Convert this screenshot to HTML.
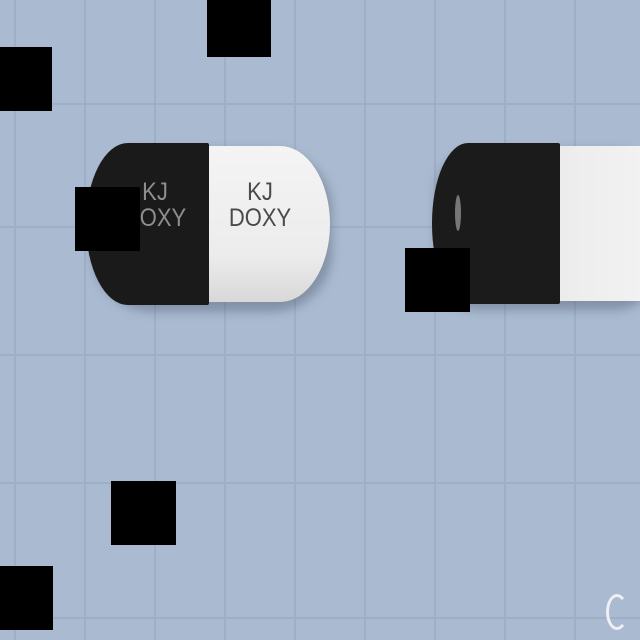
<!DOCTYPE html>
<html><head><style>
body{margin:0;width:640px;height:640px;overflow:hidden;position:relative;background:#aabbd1;font-family:"Liberation Sans",sans-serif}
.v{position:absolute;top:0;width:2px;height:640px;background:#9eb0c8}
.h{position:absolute;left:0;height:2px;width:640px;background:#9eb0c8}
.b{position:absolute;background:#000}
.t{position:absolute;text-align:center;font-size:25px;line-height:26px;transform:scaleX(0.88)}
</style></head><body>
<div class="v" style="left:14px"></div><div class="v" style="left:84px"></div><div class="v" style="left:154px"></div><div class="v" style="left:224px"></div><div class="v" style="left:294px"></div><div class="v" style="left:364px"></div><div class="v" style="left:434px"></div><div class="v" style="left:504px"></div><div class="v" style="left:574px"></div>
<div class="h" style="top:103px"></div><div class="h" style="top:226px"></div><div class="h" style="top:354px"></div><div class="h" style="top:482px"></div><div class="h" style="top:617px"></div>
<div style="position:absolute;left:92px;top:150px;width:240px;height:162px;border-radius:60px;background:rgba(60,70,90,.35);filter:blur(5px)"></div>
<div style="position:absolute;left:190px;top:146px;width:140px;height:156px;background:linear-gradient(#f4f4f4,#ececec 70%,#d8d8d8);border-radius:0 50px 50px 0/0 78px 78px 0"></div>
<div style="position:absolute;left:86px;top:143px;width:123px;height:162px;background:#1a1a1a;border-radius:42px 2px 2px 42px/81px 2px 2px 81px"></div>
<div class="t" style="left:205px;top:179px;width:110px;color:#4a4a4a">KJ<br>DOXY</div>
<div class="t" style="left:100px;top:179px;width:110px;color:#8e8e8e">KJ<br>DOXY</div>
<div style="position:absolute;left:436px;top:150px;width:220px;height:160px;border-radius:40px;background:rgba(60,70,90,.35);filter:blur(5px)"></div>
<div style="position:absolute;left:545px;top:146px;width:100px;height:155px;background:linear-gradient(90deg,#ebebeb,#f2f2f2)"></div>
<div style="position:absolute;left:432px;top:143px;width:128px;height:161px;background:#1b1b1b;border-radius:36px 2px 2px 36px/80px 2px 2px 80px"></div>
<div style="position:absolute;left:455px;top:195px;width:6px;height:36px;border-radius:50%;background:#777"></div>
<div class="b" style="left:0;top:47px;width:52px;height:64px"></div>
<div class="b" style="left:207px;top:0;width:64px;height:57px"></div>
<div class="b" style="left:75px;top:187px;width:65px;height:64px"></div>
<div class="b" style="left:405px;top:248px;width:65px;height:64px"></div>
<div class="b" style="left:111px;top:481px;width:65px;height:64px"></div>
<div class="b" style="left:0;top:566px;width:53px;height:64px"></div>
<div style="position:absolute;left:606px;top:594px;width:22px;height:36px;border:3px solid #eef0f4;border-radius:50%;border-right-color:transparent;box-sizing:border-box"></div>
</body></html>
